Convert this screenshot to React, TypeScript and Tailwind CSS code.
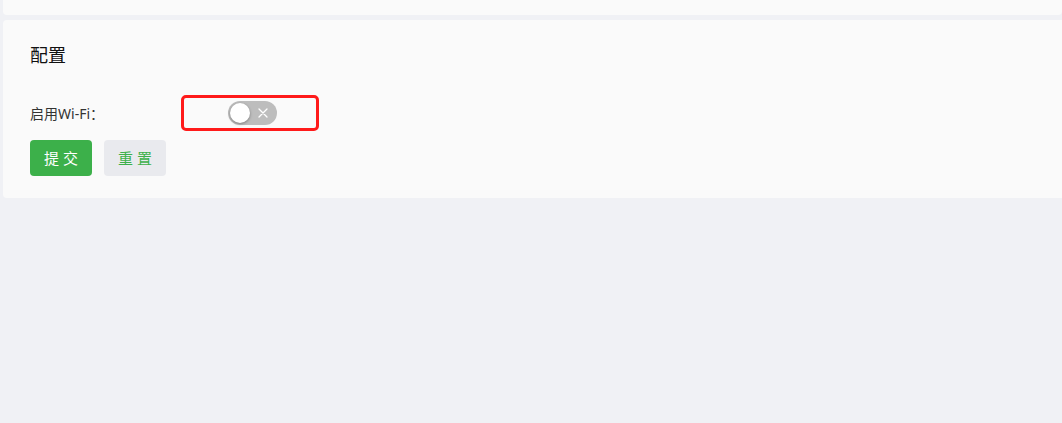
import React, { useState } from "react";

const font = { fontFamily: '"Noto Sans", "Noto Sans CJK SC", sans-serif' };

const App = () => {
  const [enabled, setEnabled] = useState(false);

  return (
    <div
      className="w-[1062px] h-[423px] bg-[#f0f1f5] pl-[3px] overflow-hidden"
      style={font}
    >
      {/* previous card (cut off) */}
      <div className="h-[15px] bg-[#fafafa] rounded-b-[4px]" />

      {/* config card */}
      <div className="mt-[5px] h-[178px] bg-[#fafafa] rounded-l-[4px] pl-[27px] pt-[21px]">
        <h3 className="text-[18px] leading-[28px] text-[#111] font-normal">
          配置
        </h3>

        <div className="mt-[26px] flex items-center h-[36px]">
          <label className="w-[151px] text-[14px] text-[#333]">
            启用Wi-Fi：
          </label>
          <div className="w-[138px] h-[36px] border-[3px] border-[#ff1a1a] rounded-[5px] flex items-center pl-[44px]">
            <button
              onClick={() => setEnabled(!enabled)}
              className={
                "relative w-[49px] h-[24px] rounded-full flex items-center " +
                (enabled ? "bg-[#3cb04a]" : "bg-[#bdbdbd]")
              }
            >
              <span
                className={
                  "absolute top-[2px] w-[20px] h-[20px] rounded-full bg-white shadow-[0_1px_3px_rgba(0,0,0,0.35)] " +
                  (enabled ? "left-[27px]" : "left-[2px]")
                }
              />
              {!enabled && (
                <svg
                  className="absolute left-[30px] top-[7px]"
                  width="10"
                  height="10"
                  viewBox="0 0 10 10"
                >
                  <path
                    d="M1 1 L9 9 M9 1 L1 9"
                    stroke="#fff"
                    strokeWidth="1.3"
                    strokeLinecap="round"
                  />
                </svg>
              )}
            </button>
          </div>
        </div>

        <div className="mt-[9px] flex gap-[12px]">
          <button className="w-[62px] h-[36px] rounded-[4px] bg-[#3cb04a] text-white text-[15px] tracking-[4px] pl-[4px]">
            提交
          </button>
          <button className="w-[62px] h-[36px] rounded-[4px] bg-[#e9eaee] text-[#3cb04a] text-[15px] tracking-[4px] pl-[4px]">
            重置
          </button>
        </div>
      </div>
    </div>
  );
};

export default App;
